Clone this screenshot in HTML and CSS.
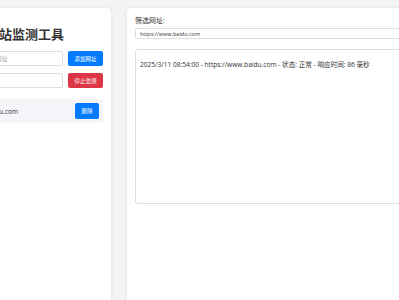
FILE: index.html
```html
<!DOCTYPE html>
<html lang="zh-CN">
<head>
<meta charset="utf-8">
<title>网站监测工具</title>
<link rel="stylesheet" href="styles.css">
</head>
<body>
<div class="layout">
  <section class="panel panel-left">
    <h1 class="title">网站监测工具</h1>
    <div class="row">
      <input class="field" type="text" placeholder="请输入要监测的网址">
      <button class="btn btn-blue">添加网址</button>
    </div>
    <div class="row">
      <input class="field" type="text">
      <button class="btn btn-red">停止监测</button>
    </div>
    <ul class="site-list">
      <li class="site-item">
        <span class="site-url">https://www.baidu.com</span>
        <button class="btn btn-blue btn-small">删除</button>
      </li>
    </ul>
  </section>
  <section class="panel panel-right">
    <label class="filter-label">筛选网址:</label>
    <select class="filter-select">
      <option>https://www.baidu.com</option>
    </select>
    <div class="log">
      <div class="log-line">2025/3/11 08:54:00 - https://www.baidu.com - 状态: 正常 - 响应时间: 86 毫秒</div>
    </div>
  </section>
</div>
</body>
</html>
```
FILE: styles.css
```css
html, body {
  margin: 0;
  padding: 0;
  background: #f4f4f4;
  overflow: hidden;
}
body {
  font-family: "Open Sans", "Noto Sans CJK SC", sans-serif;
  color: #333;
}
.layout {
  display: flex;
  gap: 16px;
  padding-top: 8px;
  height: 320px;
  box-sizing: border-box;
}
.panel {
  background: #fff;
  border-radius: 5px;
  box-shadow: 0 0 4px rgba(0, 0, 0, 0.08);
  padding: 8px;
  box-sizing: border-box;
}
.panel-left {
  flex: 0 0 172px;
  margin-left: -61px;
}
.title {
  font-family: "Noto Sans CJK SC", sans-serif;
  font-size: 13px;
  line-height: 16px;
  font-weight: bold;
  text-align: center;
  color: #333;
  margin: 10px 0 9px;
}
.row {
  display: flex;
  gap: 5px;
  margin-bottom: 7px;
}
.field {
  flex: 1;
  min-width: 0;
  height: 15px;
  box-sizing: border-box;
  border: 1px solid #ddd;
  border-radius: 2px;
  padding: 0 4px;
  font-size: 6.2px;
  font-family: inherit;
  outline: none;
}
.field::placeholder {
  color: #aaa;
}
.btn {
  flex: 0 0 35px;
  height: 15px;
  border: none;
  border-radius: 2px;
  color: #fff;
  font-size: 5.5px;
  font-family: "Noto Sans CJK SC", sans-serif;
  padding: 0;
}
.btn-blue { background: #007bff; }
.btn-red { background: #dc3545; }
.site-list {
  list-style: none;
  margin: 11px 0 0;
  padding: 0;
}
.site-item {
  display: flex;
  justify-content: space-between;
  align-items: center;
  height: 24px;
  background: #f4f4f9;
  border-radius: 2px;
  padding: 0 4px 0 0;
}
.site-url {
  font-size: 6.5px;
}
.btn-small {
  flex: 0 0 24px;
  height: 16px;
}
.panel-right {
  flex: 0 0 320px;
  display: flex;
  flex-direction: column;
}
.filter-label {
  font-size: 7px;
  line-height: 10px;
  margin-bottom: 2px;
}
.filter-select {
  height: 11px;
  width: 100%;
  border: 1px solid #ddd;
  border-radius: 2px;
  background: #fff;
  font-size: 5.5px;
  font-family: inherit;
  padding: 0 4px;
  color: #333;
  appearance: none;
  margin-bottom: 10px;
}
.log {
  height: 155px;
  box-sizing: border-box;
  border: 1px solid #ddd;
  border-radius: 3px;
  padding: 10px 4px;
}
.log-line {
  font-size: 6.6px;
  line-height: 10px;
  white-space: nowrap;
}
```
